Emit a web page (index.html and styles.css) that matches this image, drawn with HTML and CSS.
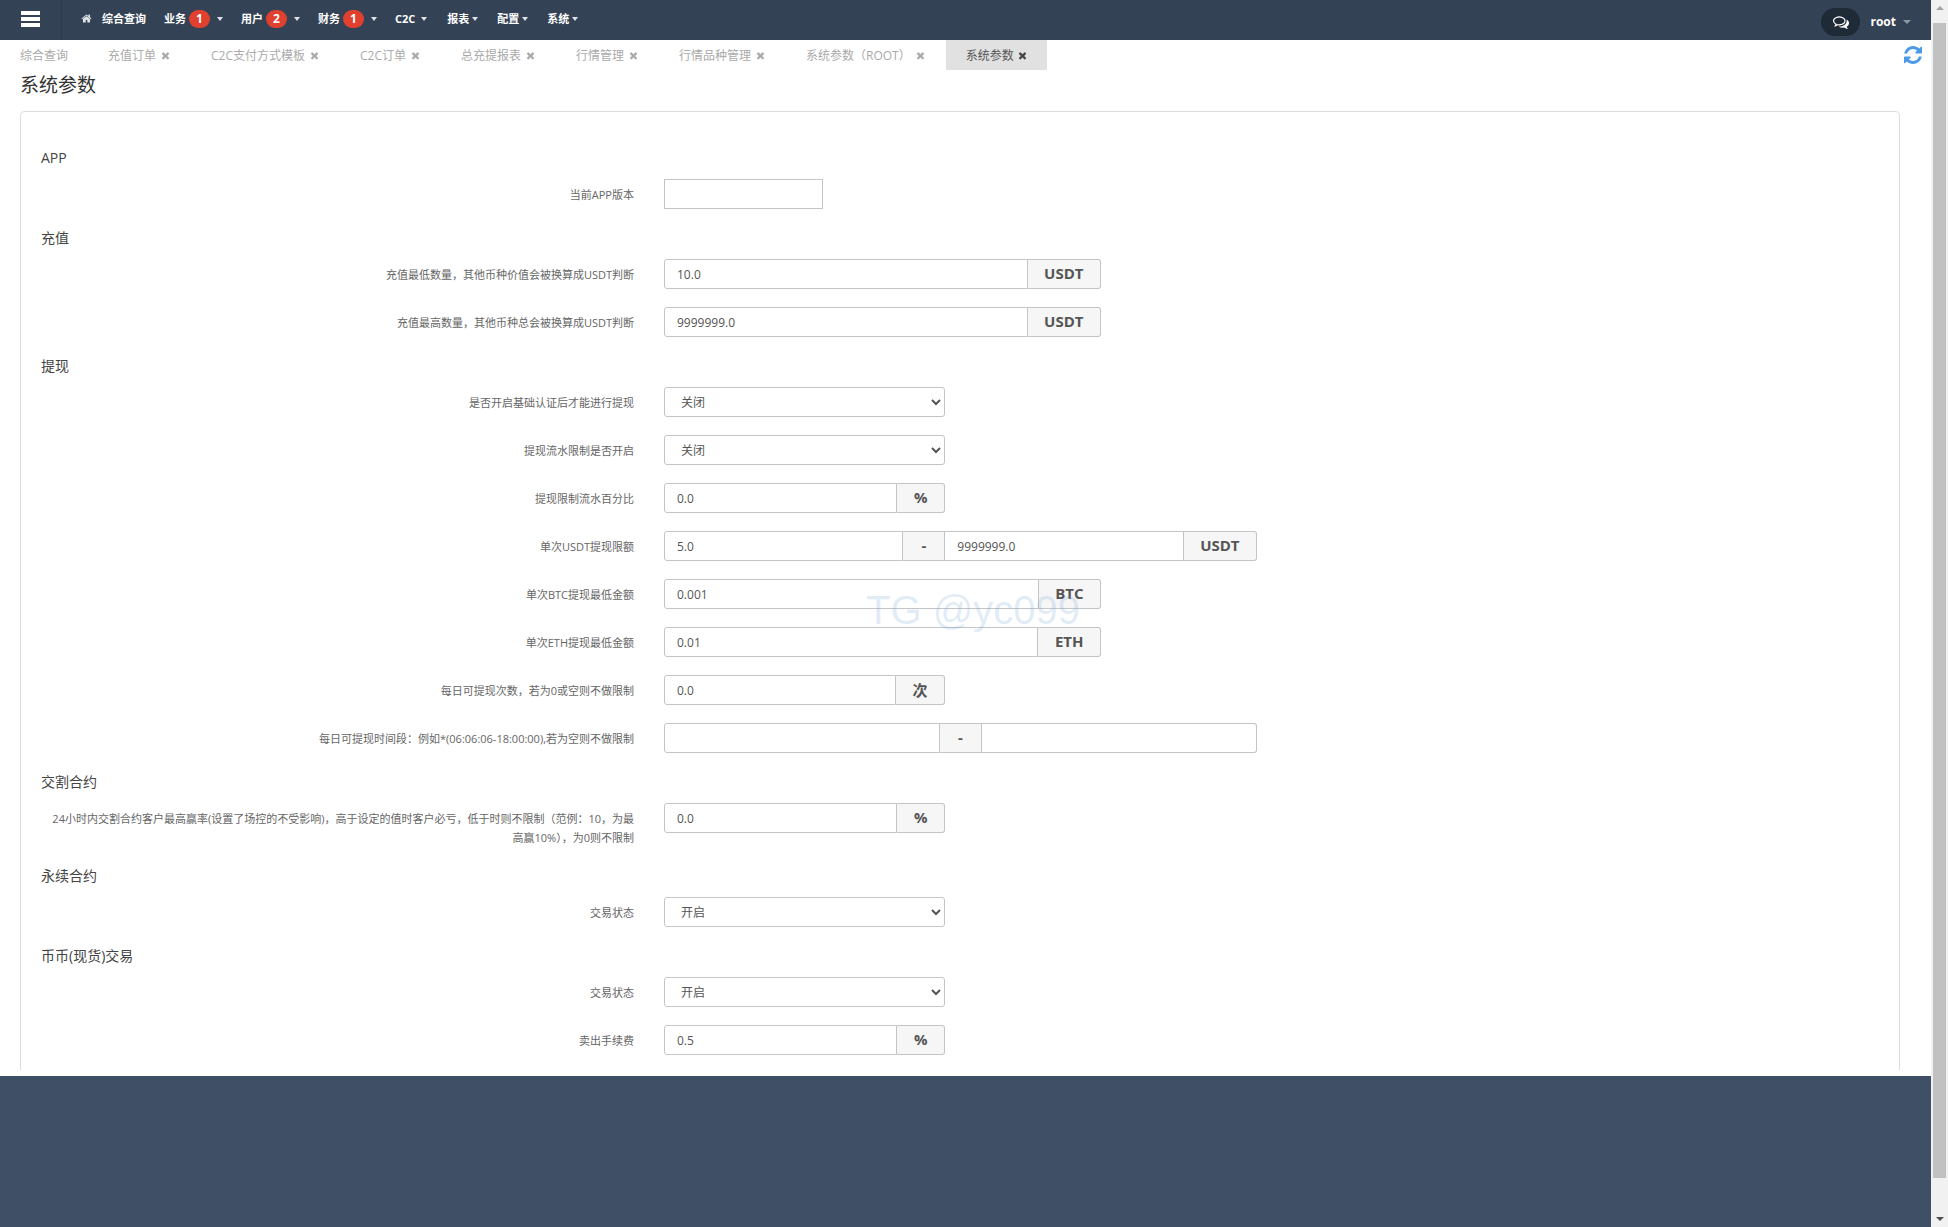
FILE: index.html
```html
<!DOCTYPE html>
<html lang="zh-CN">
<head>
<meta charset="utf-8">
<title>系统参数</title>
<link rel="stylesheet" href="styles.css">
</head>
<body>
<div class="app">
  <header class="navbar">
    <div class="burger"><span></span><span></span><span></span></div>
    <nav class="menu">
      <a class="item"><svg class="home" viewBox="0 0 1792 1792"><path d="M1472 992v480q0 26-19 45t-45 19h-384v-384h-256v384h-384q-26 0-45-19t-19-45v-480q0-1 .5-3t.5-3l575-474 575 474q1 2 1 6zm223-69l-62 74q-8 9-21 11h-3q-13 0-21-7l-692-577-692 577q-12 8-24 7-13-2-21-11l-62-74q-8-10-7-23.500t11-21.500l719-599q32-26 76-26t76 26l244 204v-195q0-14 9-23t23-9h192q14 0 23 9t9 23v408l219 182q10 8 11 21.500t-7 23.500z"/></svg>综合查询</a>
      <a class="item">业务<b class="badge">1</b><i class="caret wide"></i></a>
      <a class="item">用户<b class="badge">2</b><i class="caret wide"></i></a>
      <a class="item">财务<b class="badge">1</b><i class="caret wide"></i></a>
      <a class="item">C2C<i class="caret mid"></i></a>
      <a class="item">报表<i class="caret"></i></a>
      <a class="item">配置<i class="caret"></i></a>
      <a class="item">系统<i class="caret"></i></a>
    </nav>
    <div class="user">
      <span class="chat"><svg viewBox="0 0 1792 1792"><path d="M704 384q-153 0-286 52t-211.500 141-78.500 191q0 82 53 158t149 132l97 56-35 84q34-20 62-39l44-31 53 10q78 14 153 14 153 0 286-52t211.500-141 78.500-191-78.500-191-211.500-141-286-52zm0-128q191 0 353.500 68.500t256.500 186.500 94 257-94 257-256.500 186.500-353.500 68.500q-86 0-176-16-124 88-278 128-36 9-86 16h-3q-11 0-20.500-8t-11.500-21q-1-3-1-6.500t.5-6.500 2-6l2.500-5 3.500-5.500 4-5 4.500-5 4-4.500q5-6 23-25t26-29.500 22.500-29 25-38.500 20.500-44q-124-72-195-177t-71-224q0-139 94-257t256.500-186.500 353.500-68.500zm822 1169q10 24 20.500 44t25 38.500 22.500 29 26 29.500 23 25q1 1 4 4.500t4.500 5 4 5 3.500 5.500l2.500 5 2 6 .5 6.500-1 6.500q-3 14-13 22t-22 7q-50-7-86-16-154-40-278-128-90 16-176 16-271 0-472-132 58 4 88 4 161 0 309-45t264-129q125-92 192-212t67-254q0-77-23-152 129 71 204 178t75 230q0 120-71 224.500t-195 176.500z"/></svg></span>
      <span class="name">root</span><i class="caret dim"></i>
    </div>
  </header>

  <div class="tabs">
    <a class="tab">综合查询</a>
    <a class="tab">充值订单<svg class="x" viewBox="0 0 1792 1792"><use href="#times"/></svg></a>
    <a class="tab">C2C支付方式模板<svg class="x" viewBox="0 0 1792 1792"><use href="#times"/></svg></a>
    <a class="tab">C2C订单<svg class="x" viewBox="0 0 1792 1792"><use href="#times"/></svg></a>
    <a class="tab">总充提报表<svg class="x" viewBox="0 0 1792 1792"><use href="#times"/></svg></a>
    <a class="tab">行情管理<svg class="x" viewBox="0 0 1792 1792"><use href="#times"/></svg></a>
    <a class="tab">行情品种管理<svg class="x" viewBox="0 0 1792 1792"><use href="#times"/></svg></a>
    <a class="tab">系统参数（ROOT）<svg class="x" viewBox="0 0 1792 1792"><use href="#times"/></svg></a>
    <a class="tab active">系统参数<svg class="x" viewBox="0 0 1792 1792"><use href="#times"/></svg></a>
    <svg class="refresh" viewBox="128 128 1536 1536"><path d="M1639 1056q0 5-1 7-64 268-268 434.500t-478 166.500q-146 0-282.500-55t-243.500-157l-129 129q-19 19-45 19t-45-19-19-45v-448q0-26 19-45t45-19h448q26 0 45 19t19 45-19 45l-137 137q71 66 161 102t187 36q134 0 250-65t186-179q11-17 53-117 8-23 30-23h192q13 0 22.500 9.500t9.500 22.500zm25-800v448q0 26-19 45t-45 19h-448q-26 0-45-19t-19-45 19-45l138-138q-148-137-349-137-134 0-250 65t-186 179q-11 17-53 117-8 23-30 23h-199q-13 0-22.500-9.500t-9.500-22.500v-7q65-268 270-434.500t480-166.500q146 0 284 55.500t245 156.500l130-129q19-19 45-19t45 19 19 45z"/></svg>
  </div>

  <main class="content">
    <div class="scroller">
      <h1 class="title">系统参数</h1>
      <section class="card">
        <h2 class="section">APP</h2>
        <div class="row"><label class="label">当前APP版本</label><input class="input solo"></div>

        <h2 class="section">充值</h2>
        <div class="row"><label class="label">充值最低数量，其他币种价值会被换算成USDT判断</label>
          <div class="group md"><input class="input" value="10.0"><span class="addon">USDT</span></div></div>
        <div class="row"><label class="label">充值最高数量，其他币种总会被换算成USDT判断</label>
          <div class="group md"><input class="input" value="9999999.0"><span class="addon">USDT</span></div></div>

        <h2 class="section">提现</h2>
        <div class="row"><label class="label">是否开启基础认证后才能进行提现</label>
          <select class="select"><option>关闭</option><option>开启</option></select></div>
        <div class="row"><label class="label">提现流水限制是否开启</label>
          <select class="select"><option>关闭</option><option>开启</option></select></div>
        <div class="row"><label class="label">提现限制流水百分比</label>
          <div class="group sm"><input class="input" value="0.0"><span class="addon">%</span></div></div>
        <div class="row"><label class="label">单次USDT提现限额</label>
          <div class="group lg"><input class="input" value="5.0"><span class="addon dash">-</span><input class="input" value="9999999.0"><span class="addon">USDT</span></div></div>
        <div class="row"><label class="label">单次BTC提现最低金额</label>
          <div class="group md"><input class="input" value="0.001"><span class="addon">BTC</span></div></div>
        <div class="row"><label class="label">单次ETH提现最低金额</label>
          <div class="group md"><input class="input" value="0.01"><span class="addon">ETH</span></div></div>
        <div class="row"><label class="label">每日可提现次数，若为0或空则不做限制</label>
          <div class="group sm"><input class="input" value="0.0"><span class="addon">次</span></div></div>
        <div class="row"><label class="label">每日可提现时间段：例如*(06:06:06-18:00:00),若为空则不做限制</label>
          <div class="group lg"><input class="input"><span class="addon dash">-</span><input class="input"></div></div>

        <h2 class="section">交割合约</h2>
        <div class="row tall"><label class="label">24小时内交割合约客户最高赢率(设置了场控的不受影响)，高于设定的值时客户必亏，低于时则不限制（范例：10，为最高赢10%），为0则不限制</label>
          <div class="group sm"><input class="input" value="0.0"><span class="addon">%</span></div></div>

        <h2 class="section">永续合约</h2>
        <div class="row"><label class="label">交易状态</label>
          <select class="select"><option>开启</option><option>关闭</option></select></div>

        <h2 class="section">币币(现货)交易</h2>
        <div class="row"><label class="label">交易状态</label>
          <select class="select"><option>开启</option><option>关闭</option></select></div>
        <div class="row"><label class="label">卖出手续费</label>
          <div class="group sm"><input class="input" value="0.5"><span class="addon">%</span></div></div>
      </section>
    </div>
  </main>
  <footer class="footer"></footer>
</div>

<aside class="scrollbar">
  <i class="arrow up"></i>
  <div class="track"><div class="thumb"></div></div>
  <i class="arrow down"></i>
</aside>

<div class="watermark">TG @yc099</div>

<svg class="defs" aria-hidden="true"><defs><path id="times" d="M1490 1322q0 40-28 68l-136 136q-28 28-68 28t-68-28l-294-294-294 294q-28 28-68 28t-68-28l-136-136q-28-28-28-68t28-68l294-294-294-294q-28-28-28-68t28-68l136-136q28-28 68-28t68 28l294 294 294-294q28-28 68-28t68 28l136 136q28 28 28 68t-28 68l-294 294 294 294q28 28 28 68z"/></defs></svg>
</body>
</html>
```

FILE: styles.css
```css
* { box-sizing: border-box; }
html, body { height: 100%; }
body {
  margin: 0;
  display: flex;
  height: 1227px;
  overflow: hidden;
  background: #fff;
  font-family: "Open Sans", "Noto Sans CJK SC", sans-serif;
  font-size: 12px;
  color: #666;
}
.app { flex: 1; min-width: 0; display: flex; flex-direction: column; }

/* navbar */
.navbar {
  flex: 0 0 40px;
  display: flex;
  align-items: center;
  background: #344256;
  color: #fff;
}
.burger {
  width: 62px;
  height: 40px;
  padding: 11px 0 0 21px;
  display: flex;
  flex-direction: column;
  gap: 2px;
  border-right: 1px solid #2e3a4b;
}
.burger span { display: block; width: 19px; height: 4px; background: #fff; }
.menu { display: flex; align-items: center; gap: 18px; margin: -3px 0 0 19px; }
.item {
  display: flex;
  align-items: center;
  font-size: 11px;
  font-weight: 700;
  line-height: 36px;
  white-space: nowrap;
}
.home { width: 11px; height: 11px; margin-right: 10px; fill: #dfe3e8; }
.badge {
  width: 21px;
  height: 18px;
  margin-left: 3px;
  border-radius: 9px;
  background: #e2402f;
  color: #fff;
  font-size: 12px;
  font-weight: 700;
  line-height: 18px;
  text-align: center;
}
.caret {
  width: 0;
  height: 0;
  margin-left: 3px;
  margin-right: 1px;
  border-left: 3.5px solid transparent;
  border-right: 3.5px solid transparent;
  border-top: 4px solid #dfe3e8;
}
.caret.wide { margin-left: 7px; margin-right: 0; }
.caret.mid { margin-left: 6px; margin-right: 2px; }
.caret.dim {
  margin-left: 7px;
  margin-right: 0;
  border-left-width: 4px;
  border-right-width: 4px;
  border-top-color: #8d96a3;
}
.user { margin-left: auto; display: flex; align-items: center; padding: 4px 20px 0 0; }
.chat {
  width: 39px;
  height: 28px;
  display: flex;
  align-items: center;
  justify-content: center;
  border-radius: 14px;
  background: #1f2a37;
}
.chat svg { width: 16px; height: 16px; fill: #fff; }
.name { margin-left: 10px; font-size: 12px; font-weight: 700; line-height: 20px; }

/* tabs */
.tabs { flex: 0 0 30px; display: flex; align-items: stretch; }
.tab {
  display: flex;
  align-items: center;
  padding: 0 20px;
  color: #aaa;
  font-size: 12px;
  white-space: nowrap;
}
.tab.active { padding-right: 19px; background: #e1e1e1; color: #555; }
.x { width: 11px; height: 11px; margin-left: 4px; fill: #aaa; }
.active .x { margin-left: 3px; fill: #444; }
.refresh { width: 18px; height: 18px; margin: 6px 9px 0 auto; fill: #4a9ae8; }
.defs { width: 0; height: 0; position: absolute; }

/* content */
.content { flex: 0 0 1006px; padding-bottom: 6px; background: #fff; }
.scroller { height: 1000px; overflow: hidden; }
.title {
  margin: 0 0 11px 20px;
  font-size: 19px;
  font-weight: 400;
  line-height: 30px;
  color: #333;
}
.card {
  margin: 0 31px 0 20px;
  padding: 35px 16px 40px 20px;
  border: 1px solid #ddd;
  border-radius: 4px;
}
.section {
  margin: 0 0 10px;
  font-size: 14px;
  font-weight: 400;
  line-height: 22px;
  color: #444;
}
.row { display: flex; align-items: flex-start; gap: 30px; min-height: 30px; margin-bottom: 18px; }
.row.tall { min-height: 44px; }
.label {
  flex: 0 0 593px;
  padding: 6px 0 0 6px;
  text-align: right;
  font-size: 11px;
  line-height: 19px;
  color: #666;
}

/* controls */
.input {
  flex: 1 1 0;
  min-width: 0;
  height: 30px;
  padding: 0 12px;
  border: 1px solid #c2c5c8;
  border-radius: 0;
  outline: none;
  background: #fff;
  font: inherit;
  font-size: 12px;
  color: #555;
}
.input.solo { flex: 0 0 159px; }
.select {
  width: 281px;
  height: 30px;
  padding: 0 12px;
  border: 1px solid #c2c5c8;
  border-radius: 3px;
  background: #fff;
  font: inherit;
  font-size: 12px;
  color: #555;
}
.group { display: flex; height: 30px; }
.group.sm { width: 281px; }
.group.md { width: 437px; }
.group.lg { width: 593px; }
.group .input + .addon, .group .addon + .input { border-left: 0; }
.group .input:first-child { border-radius: 3px 0 0 3px; }
.group .input:last-child { border-radius: 0 3px 3px 0; }
.addon {
  display: flex;
  align-items: center;
  padding: 0 16.5px 2px;
  border: 1px solid #c2c5c8;
  background: #f6f6f6;
  font-size: 15px;
  font-weight: 700;
  color: #555;
}
.addon.dash { flex: 0 0 42px; justify-content: center; padding-left: 0; padding-right: 0; }
.addon:last-child { border-radius: 0 3px 3px 0; }

.footer { flex: 1; background: #3f5066; }

/* scrollbar */
.scrollbar {
  flex: 0 0 17px;
  display: flex;
  flex-direction: column;
  align-items: center;
  background: #f1f1f1;
}
.track { flex: 1; width: 100%; padding: 17px 2px 0; margin-top: -4px; }
.thumb { height: 1155px; background: #c1c1c1; }
.arrow { width: 0; height: 0; border-left: 4px solid transparent; border-right: 4px solid transparent; }
.arrow.up { margin-top: 6px; border-bottom: 4px solid #a3a3a3; }
.arrow.down { margin-bottom: 6px; border-top: 4px solid #505050; }

/* overlay */
.watermark {
  position: absolute;
  left: 866px;
  top: 587px;
  font-family: "Liberation Sans", sans-serif;
  font-size: 40px;
  line-height: 46px;
  color: rgba(120, 170, 215, 0.23);
  pointer-events: none;
}
```
